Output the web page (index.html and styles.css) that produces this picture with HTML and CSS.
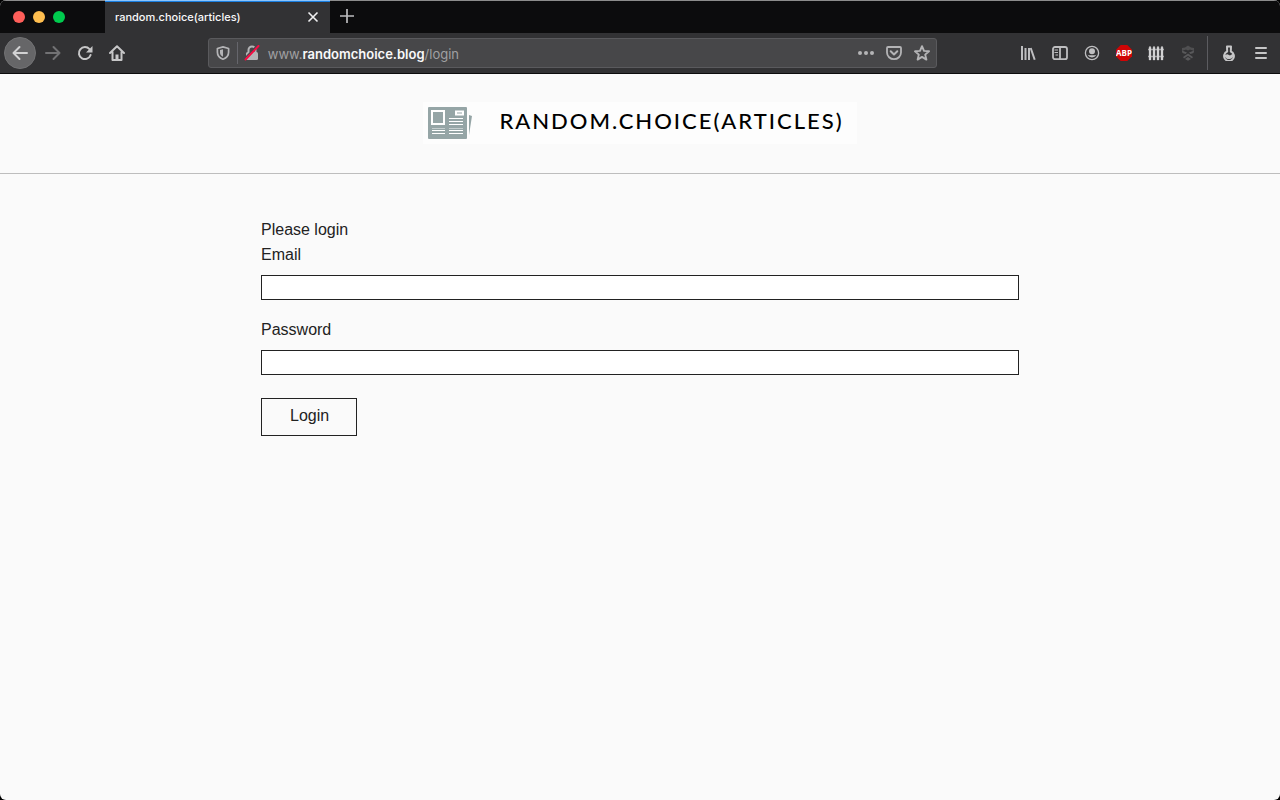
FILE: index.html
```html
<!DOCTYPE html>
<html lang="en">
<head>
<meta charset="utf-8">
<meta name="viewport" content="width=device-width, initial-scale=1">
<title>random.choice(articles)</title>
<link rel="stylesheet" href="styles.css">
</head>
<body>
<div class="window">
  <div class="tabbar">
    <div class="lights">
      <button class="light close" aria-label="Close window"></button>
      <button class="light minimise" aria-label="Minimise window"></button>
      <button class="light maximise" aria-label="Maximise window"></button>
    </div>
    <div class="tab">
      <span class="tab-title">random.choice(articles)</span>
      <button class="tab-close" aria-label="Close tab">
        <svg width="16" height="16" viewBox="0 0 16 16"><path d="M3.500 3.500l9 9M12.500 3.500l-9 9" stroke="#f0f0f1" stroke-width="1.600" fill="none"/></svg>
      </button>
    </div>
    <button class="new-tab" aria-label="New tab">
      <svg width="16" height="16" viewBox="0 0 16 16"><path d="M8 1v14M1 8h14" stroke="#bcbcbe" stroke-width="1.700" fill="none"/></svg>
    </button>
  </div>
  <nav class="toolbar" aria-label="Browser toolbar">
    <div class="group nav-group">
      <button class="tool back" aria-label="Back">
        <svg width="16" height="16" viewBox="0 0 16 16" fill="none" stroke="#d2d2d3" stroke-width="2" stroke-linecap="round" stroke-linejoin="round"><path d="M15 8H1.500M7.500 2L1.500 8l6 6"/></svg>
      </button>
      <button class="tool" aria-label="Forward" disabled>
        <svg width="16" height="16" viewBox="0 0 16 16" fill="none" stroke="#727274" stroke-width="2" stroke-linecap="round" stroke-linejoin="round"><path d="M1 8h13.500M8.500 2l6 6-6 6"/></svg>
      </button>
      <button class="tool" aria-label="Reload">
        <svg width="16" height="16" viewBox="0 0 16 16"><path d="M12.500 4.200A6 6 0 1 0 13.600 10" fill="none" stroke="#c6c6c7" stroke-width="2" stroke-linecap="round"/><path d="M15.500 1v6.500H9z" fill="#c6c6c7"/></svg>
      </button>
      <button class="tool" aria-label="Home">
        <svg width="16" height="16" viewBox="0 0 16 16" fill="none" stroke="#c6c6c7" stroke-width="2" stroke-linejoin="round" stroke-linecap="round"><path d="M1 8l7-6.800L15 8M3.500 7v8h9V7"/><path d="M8 9.500V14" stroke-width="3" stroke-linecap="butt"/></svg>
      </button>
    </div>
    <div class="spring"></div>
    <div class="address">
      <button class="shield" aria-label="Tracking protection">
        <svg width="14" height="14" viewBox="0 0 14 14"><path d="M7 .9L1.400 2.500v3.800C1.400 9.900 3.600 12 7 13.200c3.400-1.200 5.600-3.300 5.600-6.900V2.500z" fill="none" stroke="#b4b4b6" stroke-width="1.700" stroke-linejoin="round"/><path d="M7 3.200L4 4v2.500C4 8.700 5 9.900 7 10.700z" fill="#b4b4b6"/></svg>
      </button>
      <button class="lock" aria-label="Connection is not secure">
        <svg width="16" height="16" viewBox="0 0 16 16"><path d="M4.500 8V5a3.500 3.500 0 0 1 7 0v3" fill="none" stroke="#b4b4b6" stroke-width="2"/><rect x="2" y="7" width="12" height="8" rx="1.500" fill="#b4b4b6"/><path d="M.5 13.500L13.500 0" stroke="#474749" stroke-width="1.500"/><path d="M1.500 14.500L14.500 1" stroke="#f50b42" stroke-width="2" stroke-linecap="round"/></svg>
      </button>
      <div class="url">www.<span class="domain">randomchoice.blog</span>/login</div>
      <button class="action" aria-label="Page actions">
        <svg width="18" height="16" viewBox="0 0 18 16" fill="#b4b4b6"><circle cx="3" cy="8" r="2"/><circle cx="9" cy="8" r="2"/><circle cx="15" cy="8" r="2"/></svg>
      </button>
      <button class="action" aria-label="Save to Pocket">
        <svg width="16" height="16" viewBox="0 0 16 16" fill="none" stroke="#b4b4b6" stroke-width="1.800" stroke-linecap="round" stroke-linejoin="round"><path d="M2 2h12q1 0 1 1v4.500a7 6.700 0 0 1-14 0V3q0-1 1-1z"/><path d="M4.700 6.300L8 9.500l3.300-3.200" stroke-width="2"/></svg>
      </button>
      <button class="action" aria-label="Bookmark this page">
        <svg width="16" height="16" viewBox="0 0 16 16"><path d="M8 1.200l2 4.700 5 .4-3.800 3.300 1.200 5L8 11.900l-4.400 2.700 1.200-5L1 6.300l5-.4z" fill="none" stroke="#b4b4b6" stroke-width="1.900" stroke-linejoin="round"/></svg>
      </button>
    </div>
    <div class="spring"></div>
    <div class="group">
      <button class="tool" aria-label="Library">
        <svg width="16" height="16" viewBox="0 0 16 16" fill="none" stroke="#bebec0" stroke-width="2"><path d="M2 1v14M5.500 3v12M9 3v12M10.700 3l4 11.700"/></svg>
      </button>
      <button class="tool" aria-label="Sidebar">
        <svg width="16" height="16" viewBox="0 0 16 16" fill="none" stroke="#bebec0" stroke-width="1.800"><rect x="1" y="2" width="14" height="12.200" rx="2"/><path d="M8 2v12"/><path d="M2.500 5H6M2.500 7.500H6M3.500 10H6" stroke-width="1"/></svg>
      </button>
      <button class="tool" aria-label="Account">
        <svg width="16" height="16" viewBox="0 0 16 16"><circle cx="8" cy="8" r="6.600" fill="none" stroke="#bebec0" stroke-width="1.300"/><circle cx="8" cy="6.300" r="3" fill="#bebec0"/><path d="M3.600 9.800q2 .5 3 .5h2.800q1 0 3-.5a5 5 0 0 1-8.800 0z" fill="#bebec0"/></svg>
      </button>
      <button class="tool" aria-label="Adblock Plus">
        <svg width="16" height="16" viewBox="0 0 16 16"><path d="M4.700 0h6.600L16 4.700v6.600L11.300 16H4.700L0 11.300V4.700z" fill="#cf0505"/><text x="8" y="11" class="abp" text-anchor="middle">ABP</text></svg>
      </button>
      <button class="tool" aria-label="Containers">
        <svg width="16" height="16" viewBox="0 0 16 16"><path d="M0 4.500h16M0 11.500h16" stroke="#a0a0a2" stroke-width="1.400"/><path d="M1 15V2.500L2 1l1 1.500V15zM5 15V2.500L6 1l1 1.500V15zM9 15V2.500L10 1l1 1.500V15zM13 15V2.500L14 1l1 1.500V15z" fill="#d2d2d3" stroke="#d2d2d3" stroke-width=".3"/></svg>
      </button>
      <button class="tool" aria-label="Privacy extension" disabled>
        <svg width="16" height="16" viewBox="0 0 16 16" fill="#59595b"><path d="M2 3l3-.6L8 .5l3 1.900 3 .6v3l-4-1.500-2 1-2-1L2 6z" opacity=".75"/><path d="M1.800 5.500L7 7.500 5.500 9 2.500 8zM14.200 5.500L9 7.500 10.500 9l3-1zM8 8.500l5 3.500-1 1.500L8 10.800 4 13.500 3 12z"/><path d="M5 14l3-2 3 2-3 1.700z"/></svg>
      </button>
      <span class="divider"></span>
      <button class="tool" aria-label="Experiments">
        <svg width="16" height="16" viewBox="0 0 16 16"><path d="M6 1.500h4l-.2 5a4.900 4.900 0 1 1-3.600 0z" fill="none" stroke="#c6c6c7" stroke-width="2" stroke-linejoin="round"/><path d="M3 10l3.500-.8 2.500 1.300 4-2.500a5 5 0 1 1-10 2z" fill="#c6c6c7"/></svg>
      </button>
      <button class="tool" aria-label="Menu">
        <svg width="16" height="16" viewBox="0 0 16 16"><path d="M3 3h10M3 8h10M3 13h10" stroke="#c6c6c7" stroke-width="2" stroke-linecap="round"/></svg>
      </button>
    </div>
  </nav>
  <div class="page">
    <header class="masthead">
      <a class="brand" href="/">
        <svg width="46" height="34" viewBox="0 0 46 34" aria-hidden="true">
          <rect x="0" y="1" width="39" height="32" rx="1" fill="#95a5a6"/>
          <path d="M41 9l3 1-3 19z" fill="#95a5a6"/>
          <rect x="4" y="5" width="12" height="13" fill="none" stroke="#fff" stroke-width="2"/>
          <rect x="28" y="5.500" width="7" height="3" fill="none" stroke="#fff" stroke-width="2"/>
          <path d="M21 12.500h14M21 15.500h14M21 18.500h14M4 24.500h13M4 27.500h13M21 24.500h14M21 27.500h14" stroke="#fff"/>
          <path d="M4 22.500h13M21 22.500h14" stroke="#c4cdce"/>
        </svg>
        <span class="brand-name">RANDOM.CHOICE(ARTICLES)</span>
      </a>
    </header>
    <main class="content">
      <form class="login">
        <p class="prompt">Please login</p>
        <label class="label" for="email">Email</label>
        <input class="field" id="email" type="email" name="email">
        <label class="label" for="password">Password</label>
        <input class="field" id="password" type="password" name="password">
        <button class="submit" type="submit">Login</button>
      </form>
    </main>
  </div>
</div>
</body>
</html>
```
FILE: styles.css
```css
* {
  box-sizing: border-box;
}

body {
  margin: 0;
  background: #000;
  color: #222;
  font-family: "Liberation Sans", Arial, sans-serif;
  font-size: 16px;
  line-height: 25px;
}

button {
  padding: 0;
  border: 0;
  background: none;
  color: inherit;
  font: inherit;
}

svg {
  display: block;
}

.window {
  display: flex;
  flex-direction: column;
  min-height: 100vh;
  border-radius: 6px;
  overflow: hidden;
  background: #fafafa;
}

/* Browser chrome */

.tabbar {
  display: flex;
  height: 33px;
  border-top: 1px solid #8c8c8c;
  background: #0c0c0d;
}

.lights {
  display: flex;
  align-items: center;
  gap: 8px;
  width: 105px;
  padding-left: 13px;
}

.light {
  width: 12px;
  height: 12px;
  border-radius: 50%;
}

.close {
  background: #ff5f5a;
}

.minimise {
  background: #ffbe4f;
}

.maximise {
  background: #00cb4e;
}

.tab {
  display: flex;
  align-items: center;
  justify-content: space-between;
  width: 225px;
  margin-top: -1px;
  padding: 0 9px 0 10px;
  border-top: 1px solid #8cc4fb;
  background: #323234;
  box-shadow: inset 0 1px #1a7fe0;
}

.tab-title {
  color: #f9f9fa;
  font: 500 11px/16px Inter, sans-serif;
}

.new-tab {
  display: flex;
  align-items: center;
  justify-content: center;
  width: 34px;
  padding-bottom: 2px;
}

.toolbar {
  display: flex;
  align-items: center;
  height: 41px;
  padding: 0 3px 0 4px;
  border-bottom: 1px solid #0c0c0d;
  background: #323234;
}

.group {
  display: flex;
  align-items: center;
}

.tool {
  display: flex;
  align-items: center;
  justify-content: center;
  width: 32px;
  height: 32px;
  border-radius: 50%;
}

.back {
  margin-right: 1px;
  border: 1px solid #727274;
  background: #666668;
}

.spring {
  flex: 75;
}

.divider {
  width: 1px;
  height: 34px;
  margin: 0 5px 0 3px;
  background: #5c5c60;
}

.abp {
  fill: #fff;
  font: bold 8px "Open Sans", sans-serif;
}

.address {
  display: flex;
  flex: 729;
  align-items: center;
  height: 30px;
  border: 1px solid #5a5a5d;
  border-radius: 3px;
  background: #474749;
}

.shield,
.lock,
.action {
  display: flex;
  align-items: center;
  justify-content: center;
  width: 28px;
  height: 22px;
}

.shield {
  border-right: 1px solid #66666c;
}

.shield,
.lock {
  width: 29px;
}

.url {
  flex: 1;
  padding: 2px 0 0 1px;
  color: #a0a0a2;
  font: 13px/20px Inter, sans-serif;
}

.domain {
  color: #f9f9fa;
  font-weight: 600;
}

/* Site */

.page {
  flex: 1;
}

.masthead {
  display: flex;
  justify-content: center;
  padding: 28px 20px 29px;
  border-bottom: 1px solid #bdbdbd;
}

.brand {
  display: flex;
  align-items: center;
  gap: 25px;
  height: 42px;
  padding: 0 13px 0 5px;
  background: #fdfdfd;
  color: #000;
  text-decoration: none;
}

.brand-name {
  padding-bottom: 4px;
  font: 500 22px/38px Lato, sans-serif;
  letter-spacing: 2px;
}

.content {
  max-width: 798px;
  margin: 0 auto;
  padding: 43px 20px;
}

.login {
  display: flex;
  flex-direction: column;
}

.prompt {
  margin: 0;
}

.label {
  margin-bottom: 8px;
}

.field {
  width: 100%;
  height: 25px;
  margin: 0 0 17px;
  padding: 0 4px;
  border: 1px solid #222;
  border-radius: 0;
  background: #fff;
  font: inherit;
}

.submit {
  align-self: flex-start;
  margin-top: 6px;
  padding: 4px 27px 7px 28px;
  border: 1px solid #222;
}
```
